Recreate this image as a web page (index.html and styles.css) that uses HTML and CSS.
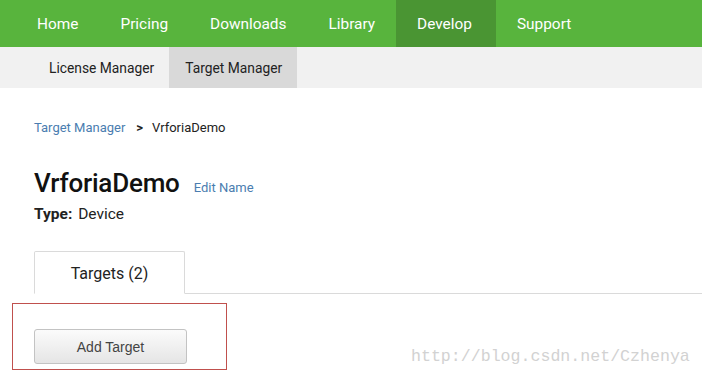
FILE: index.html
```html
<!DOCTYPE html>
<html>
<head>
<meta charset="utf-8">
<link rel="stylesheet" href="styles.css">
</head>
<body>
<header class="topnav">
  <a class="topnav-item">Home</a>
  <a class="topnav-item">Pricing</a>
  <a class="topnav-item">Downloads</a>
  <a class="topnav-item">Library</a>
  <a class="topnav-item active">Develop</a>
  <a class="topnav-item">Support</a>
</header>
<nav class="subnav">
  <a class="subnav-item">License Manager</a>
  <a class="subnav-item active">Target Manager</a>
</nav>
<main class="content">
  <div class="breadcrumb">
    <a class="link">Target Manager</a>
    <span class="sep">&gt;</span>
    <span>VrforiaDemo</span>
  </div>
  <div class="title-row">
    <h1 class="title">VrforiaDemo</h1>
    <a class="link edit">Edit Name</a>
  </div>
  <div class="type"><b>Type:</b> Device</div>
  <div class="tabs">
    <div class="tab">Targets (2)</div>
  </div>
  <button class="btn">Add Target</button>
</main>
<div class="annotation"></div>
<div class="watermark">http://blog.csdn.net/Czhenya</div>
</body>
</html>
```
FILE: styles.css
```css
* { box-sizing: border-box; }
html, body { margin: 0; padding: 0; background: #fff; }
body {
  font-family: Roboto, "Liberation Sans", Arial, sans-serif;
  color: #222;
  width: 702px;
  height: 377px;
  overflow: hidden;
  position: relative;
}
a { text-decoration: none; color: inherit; }

.topnav {
  display: flex;
  height: 47px;
  background: #58b43d;
  padding-left: 16px;
}
.topnav-item {
  color: #fff;
  font-size: 15.4px;
  line-height: 45px;
  padding: 2px 21px 0;
}
.topnav-item.active { background: #4a9533; padding-right: 24px; }

.subnav {
  display: flex;
  height: 41px;
  background: #f1f1f1;
  padding-left: 33px;
}
.subnav-item {
  font-size: 13.8px;
  line-height: 40px;
  padding: 1px 15px 0 16px;
  color: #222;
}
.subnav-item.active { background: #d9d9d9; }

.content { padding-left: 34px; }

.breadcrumb {
  margin-top: 30px;
  font-size: 13px;
  line-height: 20px;
  display: flex;
  align-items: baseline;
}
.link { color: #4a7db0; }
.sep { font-weight: bold; margin: 0 9px 0 11px; }

.title-row {
  margin-top: 29px;
  display: flex;
  align-items: baseline;
}
.title {
  margin: 0;
  font-size: 26px;
  line-height: 32px;
  font-weight: 500;
  color: #111;
  letter-spacing: -0.2px;
}
.edit { font-size: 13px; margin-left: 14px; }

.type {
  margin-top: 5px;
  font-size: 15.5px;
  line-height: 21px;
}
.type b { font-weight: 700; margin-right: 2px; }

.tabs {
  margin-top: 26px;
  border-bottom: 1px solid #dadada;
  display: flex;
}
.tab {
  width: 151px;
  height: 43px;
  border: 1px solid #dadada;
  border-bottom: 1px solid #fff;
  margin-bottom: -1px;
  font-size: 16px;
  line-height: 43px;
  text-align: center;
  border-radius: 2px 2px 0 0;
}

.btn {
  display: block;
  margin-top: 35px;
  width: 153px;
  height: 35px;
  border: 1px solid #c3c3c3;
  border-radius: 3px;
  background: linear-gradient(#fbfbfb, #e5e5e5);
  font-family: "Liberation Sans", Arial, sans-serif;
  font-size: 14px;
  color: #444;
}

.annotation {
  position: absolute;
  left: 12px;
  top: 303px;
  width: 215px;
  height: 67px;
  border: 1px solid #c0504d;
}

.watermark {
  position: absolute;
  left: 411px;
  top: 346px;
  font-family: "Liberation Mono", "DejaVu Sans Mono", monospace;
  font-size: 16.6px;
  line-height: 22px;
  color: #d2d2d2;
}
```
